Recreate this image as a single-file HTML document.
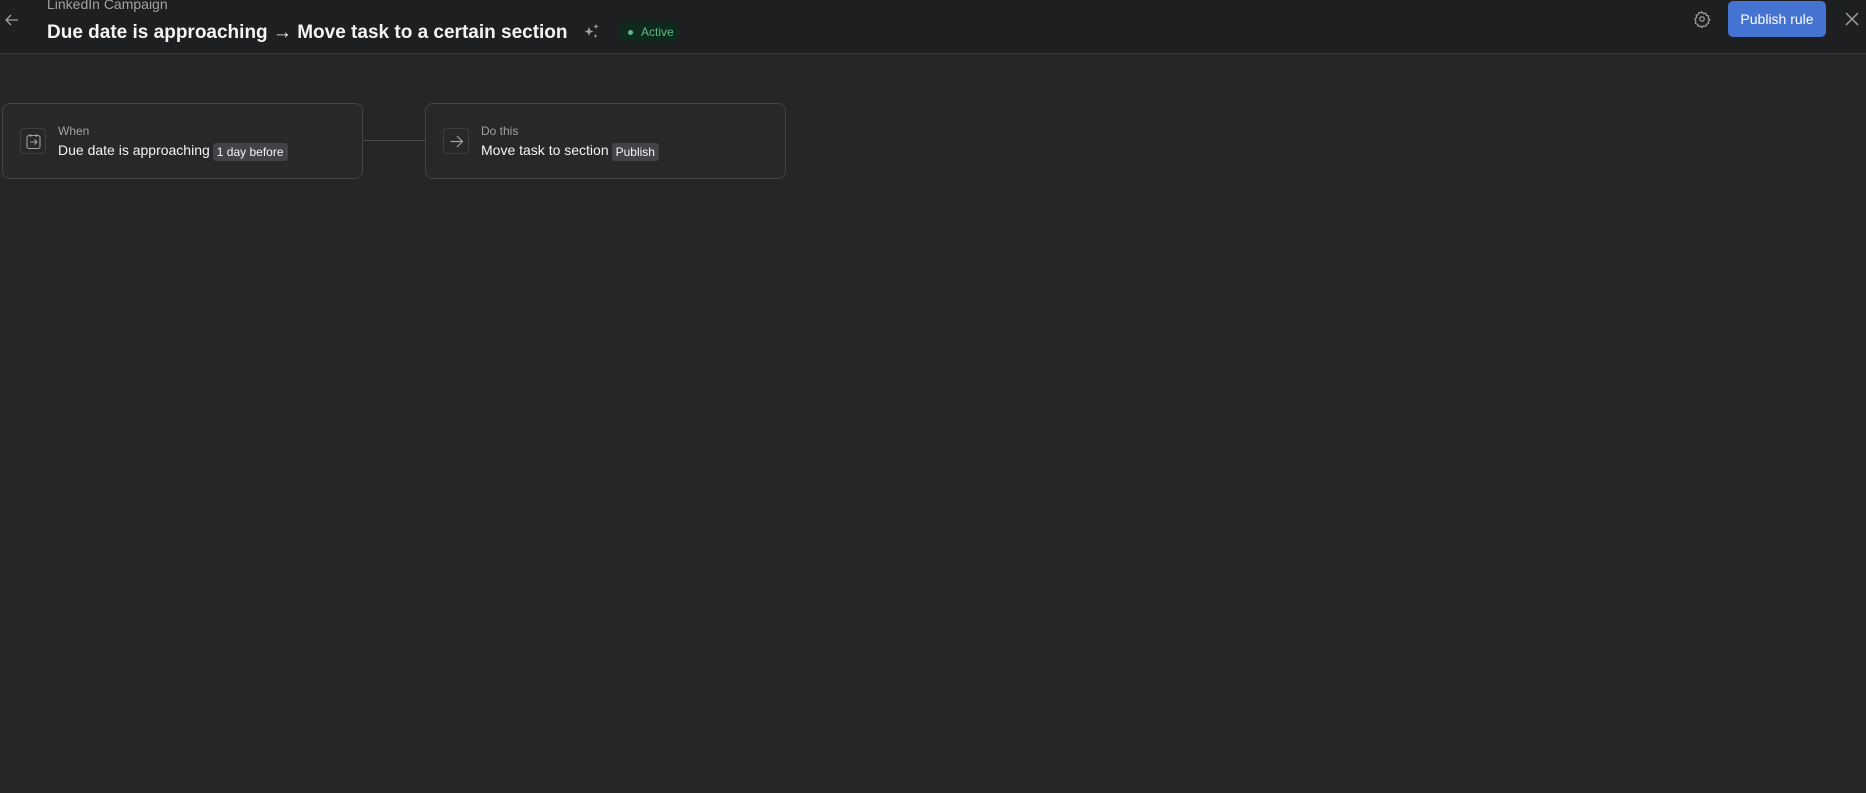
<!DOCTYPE html>
<html><head><meta charset="utf-8"><style>
*{box-sizing:border-box;margin:0;padding:0}
html,body{width:1866px;height:793px;overflow:hidden;background:#252628;font-family:"Liberation Sans",sans-serif;color:#f5f4f3}
.hdr{position:absolute;left:0;top:0;width:1866px;height:54px;background:#1e1f21;border-bottom:1px solid #3a3b3e}
.sub{position:absolute;left:47px;top:-4px;font-size:14px;color:#a2a0a2}
.title{position:absolute;left:47px;top:22px;font-size:19px;font-weight:bold;color:#f5f4f3;white-space:nowrap}
.badge{position:absolute;left:619px;top:22px;width:59px;height:20px;background:#10291d;border-radius:3px;font-size:12px;color:#5fb88a;line-height:20px;padding-left:22px}
.badge:before{content:"";position:absolute;left:9px;top:8px;width:5px;height:5px;border-radius:50%;background:#5fb88a}
.btn{position:absolute;left:1728px;top:1px;width:98px;height:36px;background:#4573d2;border-radius:5px;color:#fff;font-size:14px;text-align:center;line-height:36px}
.card{position:absolute;top:103px;width:361px;height:76px;border:1.5px solid #424346;border-radius:8px;background:#27282a}
.ib{position:absolute;left:17px;top:24px;width:26px;height:26px;border:1px solid #3d3e41;border-radius:4px}
.lab{position:absolute;left:55px;top:20px;font-size:12px;color:#a2a0a2}
.main{position:absolute;left:55px;top:38px;font-size:14px;color:#f5f4f3;white-space:nowrap}
.tag{display:inline-block;background:#424346;border-radius:3px;padding:2px 4px;font-size:12px;margin-left:3px;vertical-align:-1px}
.line{position:absolute;left:363px;top:140px;width:62px;height:1px;background:#4a4b4e}
</style></head><body>
<div class="hdr">
<svg style="position:absolute;left:4px;top:12px" width="16" height="16" viewBox="0 0 16 16" fill="none" stroke="#a2a0a2" stroke-width="1.3"><path d="M14 8H2M7 3L2 8l5 5"/></svg>
<div class="sub">LinkedIn Campaign</div>
<div class="title">Due date is approaching → Move task to a certain section</div>
<svg style="position:absolute;left:583px;top:23px" width="18" height="18" viewBox="0 0 18 18" fill="#a2a0a2"><path d="M6 4l1.2 3.3L10.5 8.5 7.2 9.7 6 13 4.8 9.7 1.5 8.5 4.8 7.3z"/><path d="M13 1l.7 1.8L15.5 3.5l-1.8.7L13 6l-.7-1.8L10.5 3.5l1.8-.7z"/><path d="M12.5 11l.6 1.4 1.4.6-1.4.6-.6 1.4-.6-1.4-1.4-.6 1.4-.6z"/></svg>
<div class="badge">Active</div>
<svg style="position:absolute;left:1693px;top:10px" width="18" height="18" viewBox="0 0 24 24" fill="none" stroke="#a2a0a2" stroke-width="1.6"><circle cx="12" cy="12" r="3"/><path d="M12 2.5l2 2.3 3-.6.9 2.9 2.9.9-.6 3 2.3 2-2.3 2 .6 3-2.9.9-.9 2.9-3-.6-2 2.3-2-2.3-3 .6-.9-2.9-2.9-.9.6-3L2.5 12l2.3-2-.6-3 2.9-.9.9-2.9 3 .6z"/></svg>
<div class="btn">Publish rule</div>
<svg style="position:absolute;left:1844px;top:11px" width="16" height="16" viewBox="0 0 16 16" stroke="#a2a0a2" stroke-width="1.4"><path d="M2 2l12 12M14 2L2 14"/></svg>
</div>
<div class="card" style="left:2px">
<div class="ib"><svg style="position:absolute;left:5px;top:4px" width="15" height="17" viewBox="0 0 15 17" fill="none" stroke="#a2a0a2" stroke-width="1.1"><rect x="1" y="2.5" width="13" height="13" rx="2"/><path d="M4.5 1v3M10.5 1v3M4 9h7M8.5 6.5L11 9l-2.5 2.5"/></svg></div>
<div class="lab">When</div>
<div class="main">Due date is approaching<span class="tag">1 day before</span></div>
</div>
<div class="line"></div>
<div class="card" style="left:425px">
<div class="ib"><svg style="position:absolute;left:5px;top:5px" width="15" height="15" viewBox="0 0 15 15" fill="none" stroke="#a2a0a2" stroke-width="1.2"><path d="M1.5 7.5h12M8 2l5.5 5.5L8 13"/></svg></div>
<div class="lab">Do this</div>
<div class="main">Move task to section<span class="tag">Publish</span></div>
</div>
</body></html>
